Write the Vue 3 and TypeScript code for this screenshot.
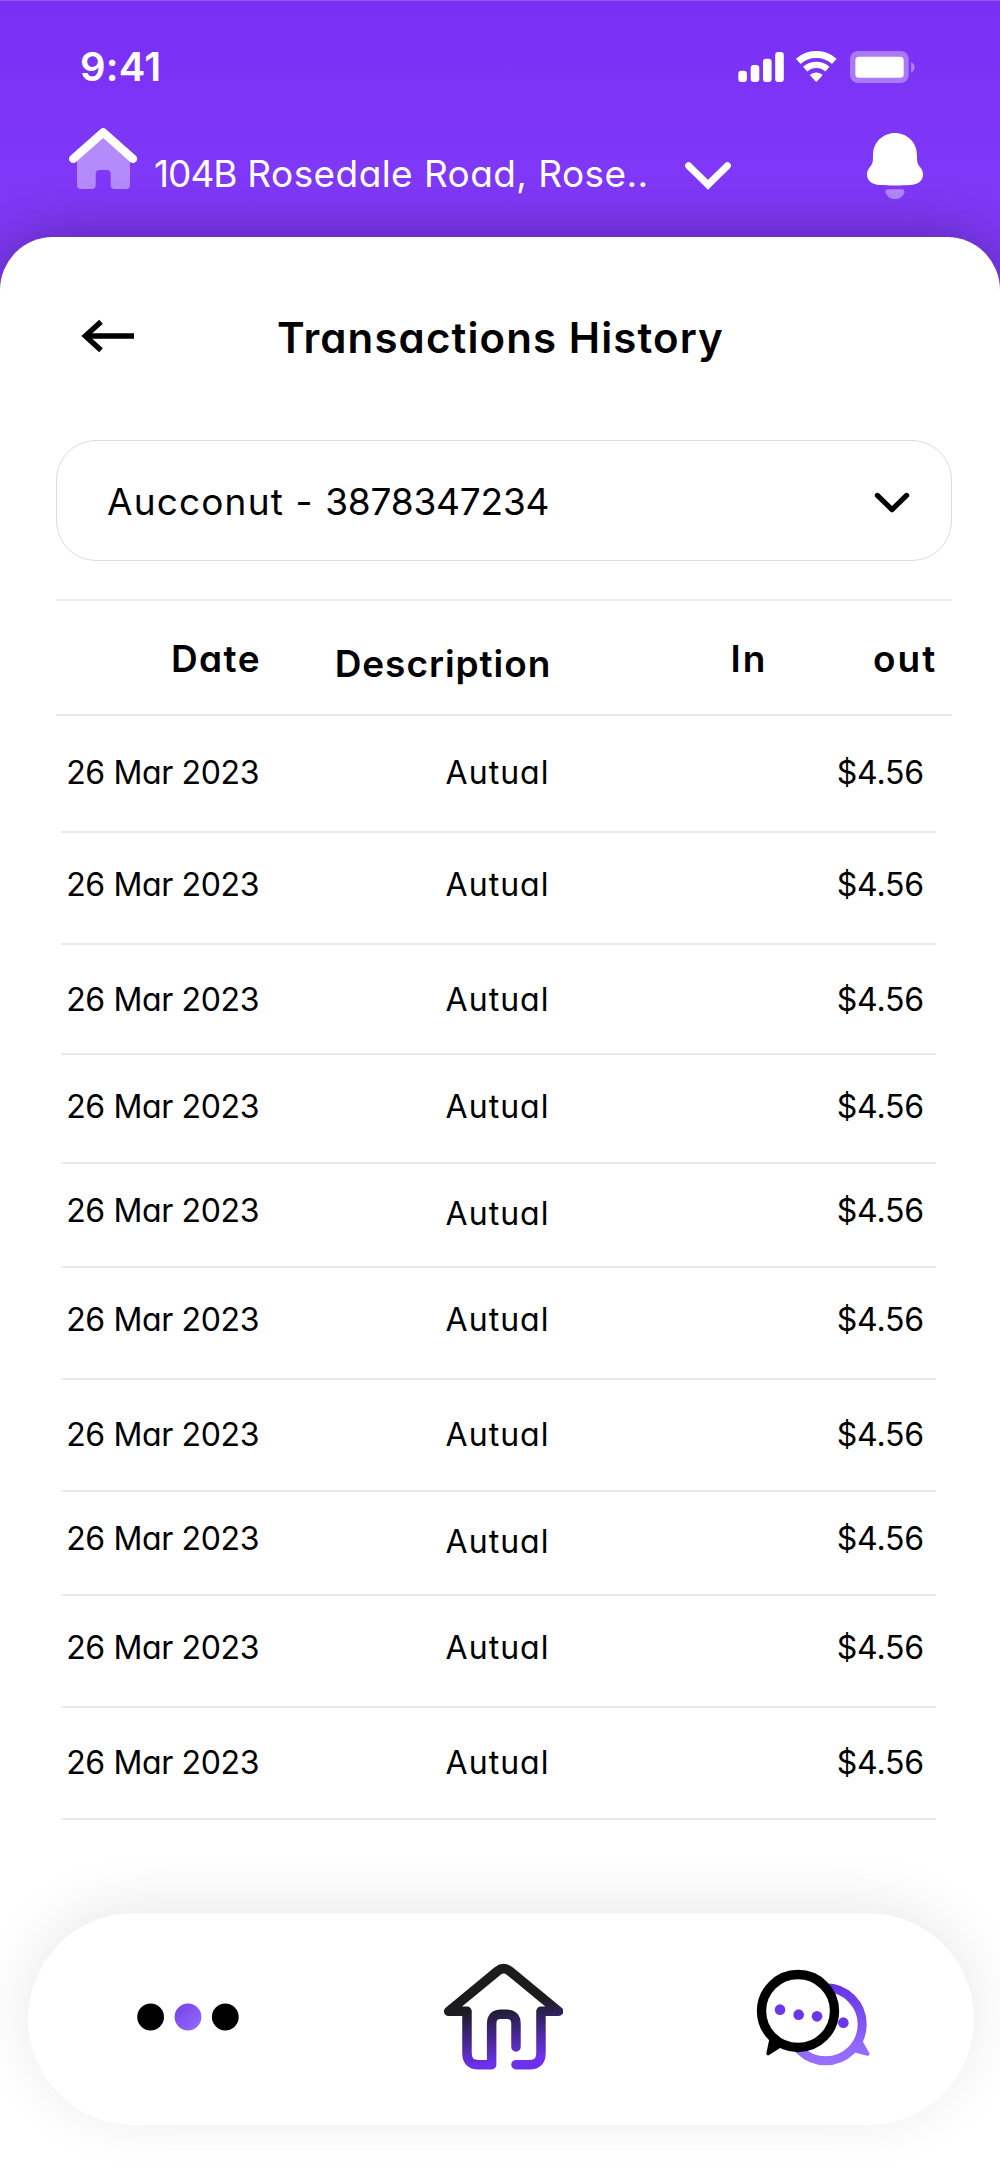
<script setup lang="ts">
interface Transaction {
  date: string
  description: string
  moneyIn: string
  moneyOut: string
  height: number
  top: number
  low?: boolean
}

const base = { date: '26 Mar 2023', description: 'Autual', moneyIn: '', moneyOut: '$4.56' }

const transactions: Transaction[] = [
  { ...base, height: 117, top: 37 },
  { ...base, height: 112, top: 32 },
  { ...base, height: 110, top: 35 },
  { ...base, height: 109, top: 32 },
  { ...base, height: 104, top: 27, low: true },
  { ...base, height: 112, top: 32 },
  { ...base, height: 112, top: 35 },
  { ...base, height: 104, top: 27, low: true },
  { ...base, height: 112, top: 32 },
  { ...base, height: 112, top: 35 },
]
</script>

<template>
  <div class="screen">
    <header class="header">
      <div class="status">
        <span class="time">9:41</span>
        <div class="status-icons">
          <svg class="signal" width="46" height="32" viewBox="0 0 46 32" fill="#fff">
            <rect x="0.3" y="19.7" width="8.6" height="11.3" rx="3" />
            <rect x="12.7" y="14" width="8.6" height="17" rx="3" />
            <rect x="25" y="7.7" width="8.6" height="23.3" rx="3" />
            <rect x="37.2" y="1" width="8.6" height="30" rx="3" />
          </svg>
          <svg class="wifi" width="41" height="32" viewBox="0 0 41 32" fill="none" stroke="#fff">
            <path d="M2.3 10.3A27.2 27.2 0 0 1 38.3 10.3" stroke-width="7" />
            <path d="M9.2 18.1A16.8 16.8 0 0 1 31.4 18.1" stroke-width="6.3" />
            <path d="M15 24.2A8.6 8.6 0 0 1 25.6 24.2L20.3 29.9Z" fill="#fff" stroke-width="1.6" stroke-linejoin="round" />
          </svg>
          <svg class="battery" width="65" height="32" viewBox="0 0 65 32" fill="#fff">
            <rect width="58.7" height="32" rx="8" opacity="0.35" />
            <rect x="5.4" y="5.7" width="48.3" height="21" rx="3.5" />
            <path d="M61.2 11C65.6 13 65.6 19.4 61.2 21.4Z" opacity="0.4" />
          </svg>
        </div>
      </div>
      <div class="location">
        <svg class="home" width="69" height="64" viewBox="0 0 69 64">
          <path d="M34 8L8 32V58Q8 62 12 62H22.7Q26.7 62 26.7 58V47Q26.7 43 30.7 43H37.7Q41.7 43 41.7 47V58Q41.7 62 45.7 62H57Q61 62 61 58V32Z" fill="#b58bfb" />
          <path d="M4.2 31.8L34.2 5.4L64 31.8" fill="none" stroke="#fff" stroke-width="8.4" stroke-linecap="round" stroke-linejoin="round" />
        </svg>
        <span class="address"><span class="house-number">104B</span> Rosedale Road, Rose..</span>
        <svg class="chevron" width="46" height="28" viewBox="0 0 46 28" fill="none" stroke="#fff" stroke-width="7" stroke-linecap="round">
          <path d="M3.6 3.8L23 22.8L42.4 3.8" />
        </svg>
        <svg class="bell" width="56" height="67" viewBox="0 0 56 67">
          <path d="M28 0C40 0 50 9.5 50 22C50 28 50 29.5 52.2 33C54.6 36 56 38 56 41.5C56 48 51 51.6 43 52C36 52.6 20 52.6 13 52C5 51.6 0 48 0 41.5C0 38 1.4 36 3.8 33C6 29.5 6 28 6 22C6 9.5 16 0 28 0Z" fill="#fff" />
          <path d="M22 56.2H34C37.4 56.2 38.2 58 37.2 60.2C35.5 64 32 66 28 66C24 66 20.5 64 18.8 60.2C17.8 58 18.6 56.2 22 56.2Z" fill="#b186fa" />
        </svg>
      </div>
    </header>

    <main class="sheet">
      <div class="title-bar">
        <svg class="back" width="54" height="34" viewBox="0 0 54 34" fill="none" stroke="#000" stroke-width="5.4">
          <path d="M53 17H6" />
          <path d="M20 2.8L4.4 17L20 31.2" />
        </svg>
        <h1>Transactions History</h1>
      </div>

      <div class="account">
        <span class="account-name">Aucconut - <span class="account-number">3878347234</span></span>
        <svg width="36" height="22" viewBox="0 0 36 22" fill="none" stroke="#000" stroke-width="5.2" stroke-linecap="round" stroke-linejoin="round">
          <path d="M3.4 3.4L18 17.6L32.6 3.4" />
        </svg>
      </div>

      <section class="table">
        <div class="head">
          <span class="date-h">Date</span>
          <span class="desc-h">Description</span>
          <span class="in-h">In</span>
          <span class="out-h">out</span>
        </div>
        <div
          v-for="(t, i) in transactions"
          :key="i"
          class="row"
          :style="{ height: t.height + 'px', paddingTop: t.top + 'px' }"
        >
          <span class="date">{{ t.date }}</span>
          <span class="desc" :class="{ low: t.low }">{{ t.description }}</span>
          <span>{{ t.moneyIn }}</span>
          <span class="out">{{ t.moneyOut }}</span>
        </div>
      </section>

      <nav class="nav">
        <svg class="more" width="102" height="28" viewBox="0 0 102 28">
          <defs>
            <linearGradient id="dot" x1="0" y1="0" x2="1" y2="1">
              <stop offset="0.1" stop-color="#7644e8" />
              <stop offset="1" stop-color="#976fff" />
            </linearGradient>
          </defs>
          <circle cx="13.6" cy="14" r="13.4" />
          <circle cx="51" cy="14" r="13.4" fill="url(#dot)" />
          <circle cx="88.3" cy="14" r="13.4" />
        </svg>
        <svg class="nav-home" width="119.3" height="106.7" viewBox="72 70 358 320">
          <defs>
            <linearGradient id="house" gradientUnits="userSpaceOnUse" x1="205" y1="205" x2="232" y2="370">
              <stop offset="0" stop-color="#1c1b1e" />
              <stop offset="0.35" stop-color="#35236b" />
              <stop offset="1" stop-color="#6d31ec" />
            </linearGradient>
          </defs>
          <path d="M288 322V252Q288 224 260 224H243Q215 224 215 252V375H175Q141 375 141 341V215H86L233 94Q251 80 269 94L416 215H363V341Q363 375 329 375H288" fill="none" stroke="url(#house)" stroke-width="28.5" stroke-linecap="round" stroke-linejoin="round" />
        </svg>
        <svg class="chat" width="114.7" height="97.3" viewBox="108 88 344 292">
          <defs>
            <linearGradient id="bubble" gradientUnits="userSpaceOnUse" x1="318" y1="131" x2="318" y2="377">
              <stop offset="0" stop-color="#6531e4" />
              <stop offset="0.75" stop-color="#9166fb" />
              <stop offset="1" stop-color="#9a70ff" />
            </linearGradient>
          </defs>
          <circle cx="317" cy="254" r="109.5" fill="none" stroke="url(#bubble)" stroke-width="27" />
          <path d="M426 301L448 341Q450 349 441 348L398 337Z" fill="url(#bubble)" />
          <circle cx="370" cy="249" r="16" fill="#6c37e8" />
          <circle cx="234" cy="214" r="109.5" fill="#fff" stroke="#000" stroke-width="28" />
          <path d="M148 298L139 341Q139 349 146 347L184 323Z" />
          <g fill="#6c37e8">
            <circle cx="180" cy="210" r="16" />
            <circle cx="236" cy="225" r="16" />
            <circle cx="291" cy="230" r="16" />
          </g>
        </svg>
      </nav>
    </main>
  </div>
</template>

<style>
body {
  margin: 0;
}
</style>

<style scoped>
.screen {
  box-sizing: border-box;
  width: 1000px;
  height: 2171px;
  overflow: hidden;
  display: flex;
  flex-direction: column;
  border-top: 1px solid #9355f8;
  background: linear-gradient(#7a2ff5 0, #7f38f7 170px, #803af4 300px);
  font-family: Inter, "Liberation Sans", sans-serif;
  font-feature-settings: 'cv11';
  color: #000;
  white-space: nowrap;
}

svg {
  display: block;
  flex: none;
}

.header {
  height: 236px;
  box-sizing: border-box;
  padding-top: 45px;
  color: #fff;
}

.status {
  display: flex;
  justify-content: space-between;
  height: 41px;
  padding: 0 85px 0 80px;
}

.time {
  font-size: 40px;
  font-weight: 600;
  line-height: 41px;
  letter-spacing: 0.2px;
}

.status-icons {
  display: flex;
  padding-top: 5px;
}

.wifi {
  margin-left: 12.5px;
}

.battery {
  margin-left: 12.8px;
}

.location {
  display: flex;
  align-items: flex-start;
  padding: 40px 77px 0 69px;
}

.address {
  width: 493px;
  margin-left: 16px;
  padding-top: 25px;
  font-size: 37px;
  line-height: 44px;
  letter-spacing: 0.42px;
}

.house-number {
  letter-spacing: -1px;
}

.chevron {
  margin: 35px 0 0 38px;
}

.bell {
  margin: 6px 0 0 auto;
}

.sheet {
  flex: 1;
  border-radius: 53px 53px 0 0;
  background: #fff;
  box-shadow: 0 0 56px rgba(0, 0, 0, 0.31);
}

.title-bar {
  display: flex;
  align-items: center;
  height: 200px;
  padding-left: 81px;
}

.back {
  margin-top: -2px;
}

h1 {
  margin: 1px 0 0 142px;
  font-size: 42px;
  font-weight: 600;
  line-height: 50px;
  letter-spacing: 1.1px;
}

.account {
  display: flex;
  align-items: center;
  justify-content: space-between;
  box-sizing: border-box;
  width: 896px;
  height: 121px;
  margin: 3px 0 0 56px;
  padding: 2px 41px 0 50px;
  border: 1px solid #dcdcdc;
  border-radius: 40px;
  font-size: 37px;
  letter-spacing: 1.15px;
}

.account-number {
  letter-spacing: -0.2px;
}

.account svg {
  margin-top: 3px;
}

.table {
  margin-top: 38px;
}

.head {
  display: grid;
  grid-template-columns: 205px 290.3px 216.2px 169.8px;
  align-items: center;
  box-sizing: border-box;
  width: 896px;
  height: 117px;
  margin-left: 56px;
  border-top: 2px solid #ededed;
  border-bottom: 2px solid #e9e9e9;
  padding-top: 2px;
  font-size: 37px;
  font-weight: 600;
  text-align: right;
}

.date-h {
  letter-spacing: 1.4px;
}

.desc-h {
  padding-top: 9px;
  letter-spacing: 0.95px;
}

.in-h {
  letter-spacing: 2px;
}

.out-h {
  letter-spacing: 2px;
}

.row {
  display: grid;
  grid-template-columns: 198.2px 290.4px 215px 159.4px;
  align-content: start;
  box-sizing: border-box;
  width: 875px;
  margin-left: 61px;
  border-bottom: 2px solid #e9e9e9;
  font-size: 32px;
  line-height: 40px;
  text-align: right;
}

.date {
  letter-spacing: -0.35px;
}

.desc {
  letter-spacing: 1.05px;
}

.low {
  padding-top: 3px;
  margin-bottom: -3px;
}

.out {
  letter-spacing: -0.2px;
}

.nav {
  display: flex;
  align-items: flex-start;
  box-sizing: border-box;
  width: 946px;
  height: 212px;
  margin: 93px 0 0 28px;
  border-radius: 106px;
  background: #fff;
  box-shadow: 0 -8px 60px rgba(0, 0, 0, 0.09);
}

.more {
  margin: 90px 0 0 108.7px;
}

.nav-home {
  margin: 50.3px 0 0 205.3px;
}

.chat {
  margin: 56.3px 0 0 192.7px;
}
</style>
